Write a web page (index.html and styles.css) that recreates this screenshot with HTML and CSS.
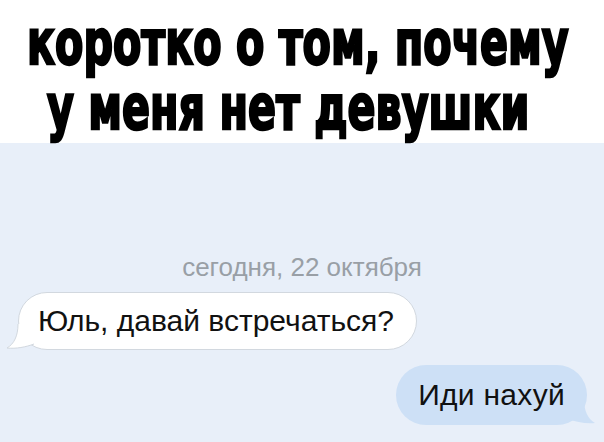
FILE: index.html
```html
<!DOCTYPE html>
<html lang="ru">

<head>
    <meta charset="UTF-8">
    <meta name="viewport" content="width=device-width, initial-scale=1.0">
    <title>коротко о том, почему у меня нет девушки</title>

    <link rel="stylesheet" href="styles.css">
</head>

<body>

    <!-- Meme caption -->
    <div class="caption">
        <span class="line line-1">коротко о том, почему</span>
        <span class="line line-2">у меня нет девушки</span>
    </div>

    <!-- Chat screenshot -->
    <div class="chat">
        <div class="date">сегодня, 22 октября</div>

        <div class="bubble incoming">
            Юль, давай встречаться?
            <svg class="tail" width="34" height="26" viewBox="0 0 34 26">
                <path d="M14 0 C14 12 10 20 3 24 C12 25 22 23 30 20 L30 0 Z" fill="#ffffff" />
                <path d="M14 0 C14 12 10 20 3 24 C12 25 22 23 30 20" fill="none" stroke="#d2d8df" stroke-width="1" />
            </svg>
        </div>

        <div class="bubble outgoing">
            Иди нахуй
            <svg class="tail" width="34" height="26" viewBox="0 0 34 26">
                <path d="M20 0 C20 12 24 20 31 24 C22 25 12 23 4 20 L4 0 Z" fill="#cde0f6" />
            </svg>
        </div>
    </div>

</body>

</html>
```

FILE: styles.css
```css
* {
    margin: 0;
    padding: 0;
    box-sizing: border-box;
}

html, body {
    width: 604px;
    height: 442px;
    overflow: hidden;
    background-color: #ffffff;
}

/* Caption */
.caption {
    height: 143px;
    padding-top: 10px;
    background-color: #ffffff;
    font-family: "DejaVu Sans", sans-serif;
    font-weight: bold;
    font-stretch: condensed;
    font-size: 62px;
    line-height: 65px;
    color: #000000;
    -webkit-text-stroke: 2.5px #000000;
}

.line {
    display: block;
    height: 65px;
    white-space: nowrap;
    transform-origin: left center;
    transform: scaleX(0.74);
}

.line-1 {
    margin-left: 27px;
}

.line-2 {
    margin-left: 47px;
}

/* Chat */
.chat {
    height: 299px;
    padding-top: 109px;
    background-color: #e8eff9;
    display: flex;
    flex-direction: column;
    font-family: "Liberation Sans", Arial, sans-serif;
}

.date {
    text-align: center;
    font-size: 26px;
    line-height: 30px;
    color: #999fa6;
}

.bubble {
    position: relative;
    font-size: 30px;
    color: #111111;
    border-radius: 30px;
    white-space: nowrap;
}

.bubble .tail {
    position: absolute;
    bottom: -1px;
}

.incoming {
    align-self: flex-start;
    margin-top: 10px;
    margin-left: 18px;
    padding: 0 22px 0 19px;
    line-height: 56px;
    background-color: #ffffff;
    border: 1px solid #d2d8df;
}

.incoming .tail {
    left: -15px;
    bottom: -1px;
}

.outgoing {
    align-self: flex-end;
    margin-top: 15px;
    margin-right: 17px;
    padding: 0 22px 0 22px;
    line-height: 60px;
    letter-spacing: 0.3px;
    background-color: #cde0f6;
}

.outgoing .tail {
    right: -11px;
    bottom: 0;
}
```
